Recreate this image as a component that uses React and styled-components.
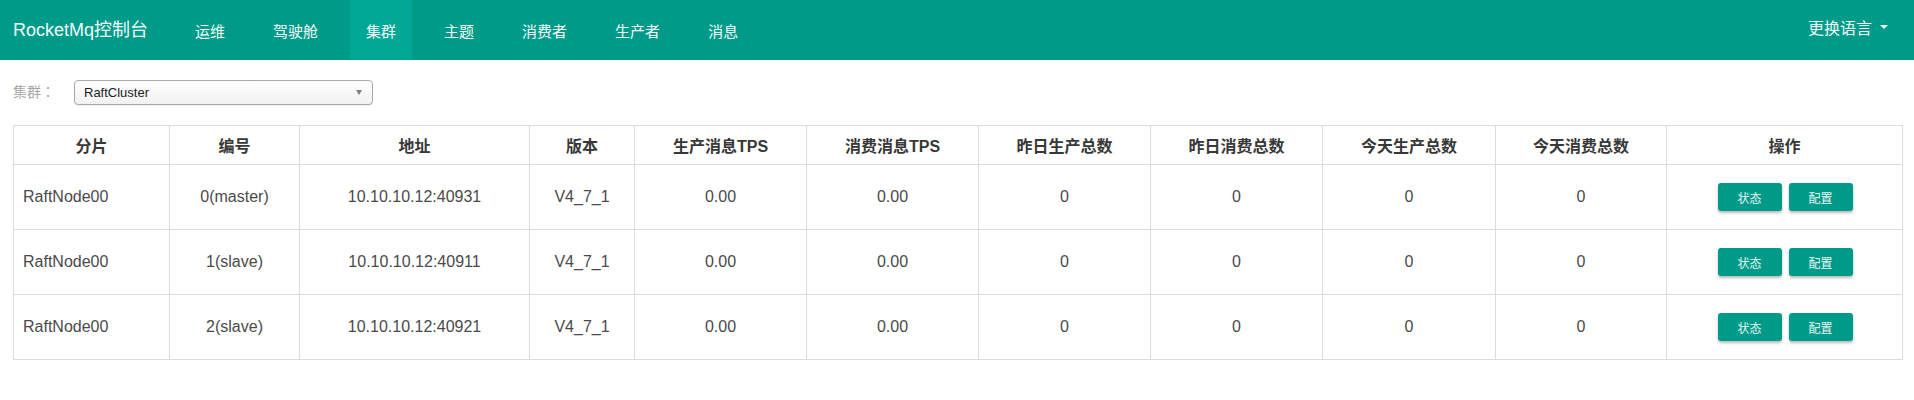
import React from "react";
import styled, { createGlobalStyle } from "styled-components";

const Global = createGlobalStyle`
  html, body { margin: 0; padding: 0; background: #fff; }
  body { font-family: "Liberation Sans", "Noto Sans CJK SC", sans-serif; color: #333; }
`;

const TEAL = "#009a89";

const NavBar = styled.nav`
  height: 60px;
  background: ${TEAL};
  display: flex;
  align-items: stretch;
  padding: 0 10px 0 13px;
  color: #f2fbfa;
`;

const Brand = styled.div`
  font-size: 18px;
  display: flex;
  align-items: center;
  padding-bottom: 5px;
  margin-right: 31px;
  white-space: nowrap;
`;

const NavList = styled.ul`
  list-style: none;
  margin: 0;
  padding: 0;
  display: flex;
  gap: 16px;
`;

const NavItem = styled.li`
  font-size: 15px;
  padding: 0 16px;
  display: flex;
  align-items: center;
  background: ${(p) => (p.$active ? "#00a795" : "transparent")};
  white-space: nowrap;
`;

const Spacer = styled.div`
  flex: 1;
`;

const LangItem = styled.div`
  font-size: 16px;
  padding: 0 16px;
  display: flex;
  align-items: center;
  padding-bottom: 6px;
  white-space: nowrap;
`;

const Caret = styled.span`
  display: inline-block;
  width: 0;
  height: 0;
  margin-left: 8px;
  border-top: 4px solid #f2fbfa;
  border-left: 4px solid transparent;
  border-right: 4px solid transparent;
`;

const Content = styled.main`
  padding: 20px 12px 0 13px;
`;

const FilterRow = styled.div`
  display: flex;
  align-items: center;
  height: 25px;
`;

const FilterLabel = styled.span`
  font-family: "Noto Sans CJK TC", "Noto Sans CJK SC", sans-serif;
  font-size: 14px;
  color: #a6a6a6;
  width: 61px;
  padding-bottom: 3px;
`;

const SelectBox = styled.div`
  box-sizing: border-box;
  width: 299px;
  height: 25px;
  border: 1px solid #a9a9a9;
  border-radius: 4px;
  background: linear-gradient(#ffffff, #f1f1f1);
  box-shadow: 0 1px 1px rgba(0, 0, 0, 0.08);
  display: flex;
  align-items: center;
  justify-content: space-between;
  padding: 0 10px 0 9px;
  font-size: 13px;
  color: #222;
`;

const SelectArrow = styled.span`
  width: 0;
  height: 0;
  border-top: 5px solid #808080;
  border-left: 3px solid transparent;
  border-right: 3px solid transparent;
`;

const Table = styled.table`
  margin-top: 20px;
  width: 100%;
  border-collapse: collapse;
  table-layout: fixed;
  border: 1px solid #dcdcdc;
`;

const Col = styled.col`
  width: ${(p) => p.$w}px;
`;

const Th = styled.th`
  height: 38px;
  padding: 0 8px;
  border: 1px solid #dcdcdc;
  font-size: 16px;
  font-weight: bold;
  color: #383838;
  text-align: center;
  white-space: nowrap;
`;

const Td = styled.td`
  height: 64px;
  padding: 0 9px;
  border: 1px solid #dcdcdc;
  font-size: 16px;
  color: #4a4a4a;
  text-align: ${(p) => (p.$left ? "left" : "center")};
  white-space: nowrap;
`;

const Actions = styled.div`
  display: flex;
  justify-content: center;
  gap: 7px;
  padding-left: 1px;
`;

const ActionButton = styled.button`
  width: 64px;
  height: 28px;
  border: none;
  border-radius: 3px;
  background: ${TEAL};
  color: #e6f6f4;
  font-family: "Liberation Sans", "Noto Sans CJK SC", sans-serif;
  font-size: 12px;
  box-shadow: 0 2px 3px rgba(0, 0, 0, 0.28);
  cursor: pointer;
  padding: 0;
`;

const navItems = ["运维", "驾驶舱", "集群", "主题", "消费者", "生产者", "消息"];

const colWidths = [156, 130, 230, 105, 172, 172, 172, 172, 173, 171, 236];

const headers = [
  "分片",
  "编号",
  "地址",
  "版本",
  "生产消息TPS",
  "消费消息TPS",
  "昨日生产总数",
  "昨日消费总数",
  "今天生产总数",
  "今天消费总数",
  "操作",
];

const rows = [
  { shard: "RaftNode00", id: "0(master)", addr: "10.10.10.12:40931" },
  { shard: "RaftNode00", id: "1(slave)", addr: "10.10.10.12:40911" },
  { shard: "RaftNode00", id: "2(slave)", addr: "10.10.10.12:40921" },
];

export default function App() {
  return (
    <>
      <Global />
      <NavBar>
        <Brand>RocketMq控制台</Brand>
        <NavList>
          {navItems.map((n) => (
            <NavItem key={n} $active={n === "集群"}>
              {n}
            </NavItem>
          ))}
        </NavList>
        <Spacer />
        <LangItem>
          更换语言
          <Caret />
        </LangItem>
      </NavBar>
      <Content>
        <FilterRow>
          <FilterLabel>集群：</FilterLabel>
          <SelectBox>
            <span>RaftCluster</span>
            <SelectArrow />
          </SelectBox>
        </FilterRow>
        <Table>
          <colgroup>
            {colWidths.map((w, i) => (
              <Col key={i} $w={w} />
            ))}
          </colgroup>
          <thead>
            <tr>
              {headers.map((h) => (
                <Th key={h}>{h}</Th>
              ))}
            </tr>
          </thead>
          <tbody>
            {rows.map((r) => (
              <tr key={r.id}>
                <Td $left>{r.shard}</Td>
                <Td>{r.id}</Td>
                <Td>{r.addr}</Td>
                <Td>V4_7_1</Td>
                <Td>0.00</Td>
                <Td>0.00</Td>
                <Td>0</Td>
                <Td>0</Td>
                <Td>0</Td>
                <Td>0</Td>
                <Td>
                  <Actions>
                    <ActionButton>状态</ActionButton>
                    <ActionButton>配置</ActionButton>
                  </Actions>
                </Td>
              </tr>
            ))}
          </tbody>
        </Table>
      </Content>
    </>
  );
}
